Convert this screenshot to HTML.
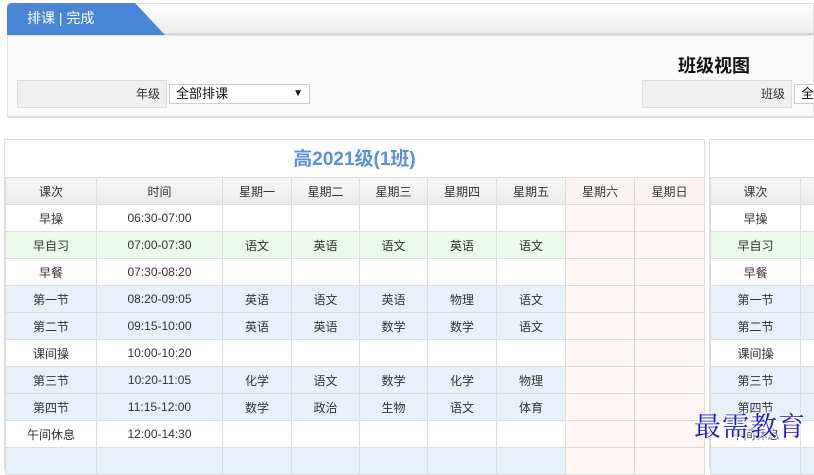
<!DOCTYPE html>
<html><head><meta charset="utf-8"><style>
*{margin:0;padding:0;box-sizing:border-box}
body{width:814px;height:458px;overflow:hidden;background:#fff;font-family:"Liberation Sans","Noto Sans CJK SC",sans-serif;font-size:12px;color:#333;position:relative}
.bar{position:absolute;left:7px;top:3px;width:807px;height:32px;background:linear-gradient(#fff,#ececec);border:1px solid #ddd;border-bottom:2px solid #d4d4d4}
.tab{position:absolute;left:7px;top:3px;width:158px;height:32px;background:#4a86d8;clip-path:polygon(0 0,128px 0,158px 32px,0 32px);border-radius:5px 0 0 0;color:#fff;font-size:14px;line-height:30px;padding-left:20px}
.panel{position:absolute;left:7px;top:35px;width:807px;height:83px;background:#fafafa;border:1px solid #e3e3e3;border-bottom:2px solid #ddd}
.ttl{position:absolute;left:678px;top:52px;font-size:18px;font-weight:bold;color:#111}
.lab{position:absolute;top:80px;height:28px;background:#f0f0f0;border:1px solid #ddd;text-align:right;line-height:26px;padding-right:6px}
.sel{position:absolute;top:84px;height:20px;background:#fff;border:1px solid #ccc;font-size:13px;line-height:18px;padding-left:6px;color:#111}
.box{position:absolute;top:139px;height:330px;border:1px solid #ddd;background:#fff}
.cap{height:37px;text-align:center;color:#5b8fe0;font-weight:bold;font-size:19px;line-height:40px}
table{border-collapse:collapse;table-layout:fixed}
td{border:1px solid #ddd;height:27px;text-align:center;font-size:12px;color:#333}
tr.h td{background:linear-gradient(#f7f7f7,#ebebeb);height:27px}
tr.g td{background:#eafbea}
tr.b td{background:#e7f1fc}
td.p{background:#fff6f6 !important}
tr.h td.p{background:#fdf2f2 !important}
.wm{position:absolute;left:694px;top:405px;font-family:"Noto Serif CJK SC",serif;font-size:27px;color:#1a1ad8;letter-spacing:1px;text-shadow:0 0 2px #fff,0 0 3px #fff,0 0 4px #fff,0 0 5px #fff}
</style></head><body>
<div class="bar"></div>
<div class="tab">排课 | 完成</div>
<div class="panel"></div>
<div class="ttl">班级视图</div>
<div class="lab" style="left:17px;width:150px">年级</div>
<div class="sel" style="left:169px;width:141px">全部排课<span style="position:absolute;right:6px;font-size:10px">▼</span></div>
<div class="lab" style="left:642px;width:150px">班级</div>
<div class="sel" style="left:794px;width:30px">全</div>

<div class="box" style="left:4px;width:701px">
<div class="cap">高2021级(1班)</div>
<table style="width:699px">
<colgroup><col style="width:91px"><col style="width:126px"><col style="width:69px"><col style="width:68px"><col style="width:68px"><col style="width:69px"><col style="width:69px"><col style="width:69px"><col style="width:70px"></colgroup>
<tr class="h"><td>课次</td><td>时间</td><td>星期一</td><td>星期二</td><td>星期三</td><td>星期四</td><td>星期五</td><td class="p">星期六</td><td class="p">星期日</td></tr>
<tr><td>早操</td><td>06:30-07:00</td><td></td><td></td><td></td><td></td><td></td><td class="p"></td><td class="p"></td></tr>
<tr class="g"><td>早自习</td><td>07:00-07:30</td><td>语文</td><td>英语</td><td>语文</td><td>英语</td><td>语文</td><td class="p"></td><td class="p"></td></tr>
<tr><td>早餐</td><td>07:30-08:20</td><td></td><td></td><td></td><td></td><td></td><td class="p"></td><td class="p"></td></tr>
<tr class="b"><td>第一节</td><td>08:20-09:05</td><td>英语</td><td>语文</td><td>英语</td><td>物理</td><td>语文</td><td class="p"></td><td class="p"></td></tr>
<tr class="b"><td>第二节</td><td>09:15-10:00</td><td>英语</td><td>英语</td><td>数学</td><td>数学</td><td>语文</td><td class="p"></td><td class="p"></td></tr>
<tr><td>课间操</td><td>10:00-10:20</td><td></td><td></td><td></td><td></td><td></td><td class="p"></td><td class="p"></td></tr>
<tr class="b"><td>第三节</td><td>10:20-11:05</td><td>化学</td><td>语文</td><td>数学</td><td>化学</td><td>物理</td><td class="p"></td><td class="p"></td></tr>
<tr class="b"><td>第四节</td><td>11:15-12:00</td><td>数学</td><td>政治</td><td>生物</td><td>语文</td><td>体育</td><td class="p"></td><td class="p"></td></tr>
<tr><td>午间休息</td><td>12:00-14:30</td><td></td><td></td><td></td><td></td><td></td><td class="p"></td><td class="p"></td></tr>
<tr class="b"><td></td><td></td><td></td><td></td><td></td><td></td><td></td><td class="p"></td><td class="p"></td></tr>
</table></div>

<div class="box" style="left:709px;width:120px">
<div class="cap"></div>
<table style="width:160px">
<colgroup><col style="width:90px"><col style="width:70px"></colgroup>
<tr class="h"><td>课次</td><td></td></tr>
<tr><td>早操</td><td></td></tr>
<tr class="g"><td>早自习</td><td></td></tr>
<tr><td>早餐</td><td></td></tr>
<tr class="b"><td>第一节</td><td></td></tr>
<tr class="b"><td>第二节</td><td></td></tr>
<tr><td>课间操</td><td></td></tr>
<tr class="b"><td>第三节</td><td></td></tr>
<tr class="b"><td>第四节</td><td></td></tr>
<tr><td>午间休息</td><td></td></tr>
<tr class="b"><td></td><td></td></tr>
</table></div>
<div class="wm">最需教育</div>
</body></html>
